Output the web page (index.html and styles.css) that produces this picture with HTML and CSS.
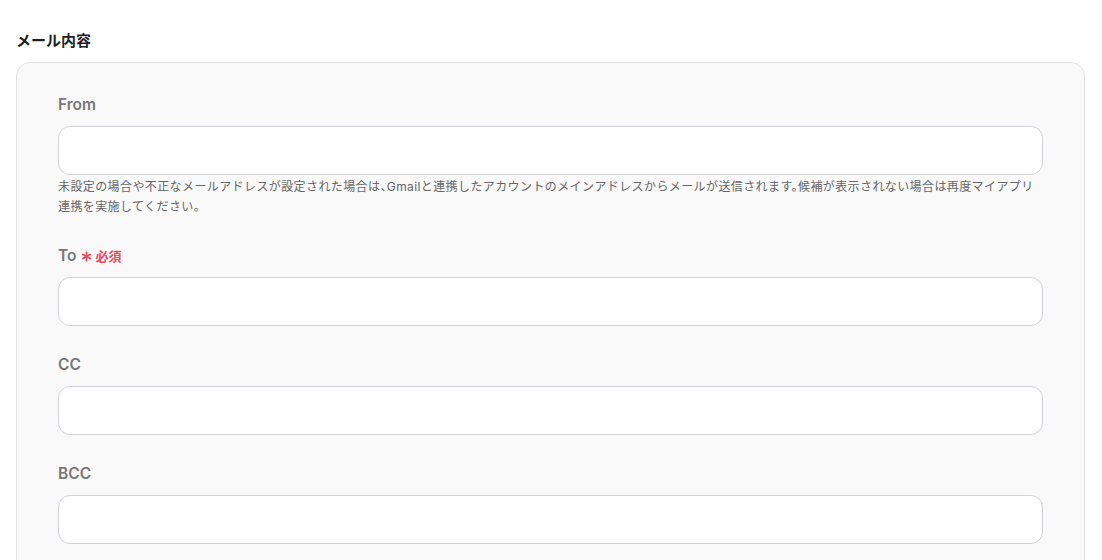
FILE: index.html
```html
<!DOCTYPE html>
<html lang="ja">
<head>
    <meta charset="UTF-8">
    <meta name="viewport" content="width=device-width, initial-scale=1.0">
    <title>メール内容</title>
    <link rel="stylesheet" href="styles.css">
</head>
<body>
<section class="mail-section">
    <h3 class="section-title">メール内容</h3>

    <div class="panel">
        <!-- From -->
        <div class="field">
            <label class="field-label" for="from">From</label>
            <input type="text" id="from" class="field-input">
            <p class="field-help">未設定の場合や不正なメールアドレスが設定された場合は、Gmailと連携したアカウントのメインアドレスからメールが送信されます。候補が表示されない場合は再度マイアプリ連携を実施してください。</p>
        </div>

        <!-- To (required) -->
        <div class="field">
            <label class="field-label" for="to">To
                <span class="required">
                    <svg class="required-mark" viewBox="0 0 12 12" width="11" height="11">
                        <g stroke="currentColor" stroke-width="2" stroke-linecap="round">
                            <line x1="6" y1="1.5" x2="6" y2="10.5"/>
                            <line x1="2.1" y1="3.75" x2="9.9" y2="8.25"/>
                            <line x1="2.1" y1="8.25" x2="9.9" y2="3.75"/>
                        </g>
                    </svg>
                    必須
                </span>
            </label>
            <input type="text" id="to" class="field-input">
        </div>

        <!-- CC -->
        <div class="field">
            <label class="field-label" for="cc">CC</label>
            <input type="text" id="cc" class="field-input">
        </div>

        <!-- BCC -->
        <div class="field">
            <label class="field-label" for="bcc">BCC</label>
            <input type="text" id="bcc" class="field-input">
        </div>
    </div>
</section>
</body>
</html>
```

FILE: styles.css
```css
/* General reset */
* {
    margin: 0;
    padding: 0;
    box-sizing: border-box;
}

body {
    font-family: 'Inter', 'Noto Sans CJK JP', sans-serif;
    background: #ffffff;
    color: #222222;
    overflow: hidden;
}

.mail-section {
    padding: 30px 17px 0 16px;
}

.section-title {
    font-size: 15px;
    line-height: 22px;
    font-weight: 700;
    color: #1f1f1f;
    margin-bottom: 10px;
}

/* Grey panel holding the fields */
.panel {
    background: #f9f9f9;
    border: 1px solid #e3e3e6;
    border-radius: 14px;
    padding: 31px 41px 40px 41px;
    display: flex;
    flex-direction: column;
    gap: 28px;
}

.field {
    display: flex;
    flex-direction: column;
}

.field-label {
    font-size: 15.5px;
    line-height: 22px;
    font-weight: 600;
    color: #777777;
    margin-bottom: 10px;
    display: flex;
    align-items: center;
    gap: 4px;
}

.required {
    display: inline-flex;
    align-items: center;
    gap: 3px;
    color: #f0485c;
    font-size: 13px;
    font-weight: 700;
}

.required-mark {
    display: block;
    margin-left: 1px;
}

.field-input {
    width: 100%;
    height: 49px;
    background: #ffffff;
    border: 1px solid #cfd2d9;
    border-radius: 12px;
    padding: 0 14px;
    font-size: 14px;
    outline: none;
}

/* half-width punctuation, slightly open tracking */
.field-help {
    margin-top: 2px;
    font-size: 12px;
    line-height: 20px;
    letter-spacing: 0.4px;
    font-feature-settings: "halt";
    color: #666666;
}
```
